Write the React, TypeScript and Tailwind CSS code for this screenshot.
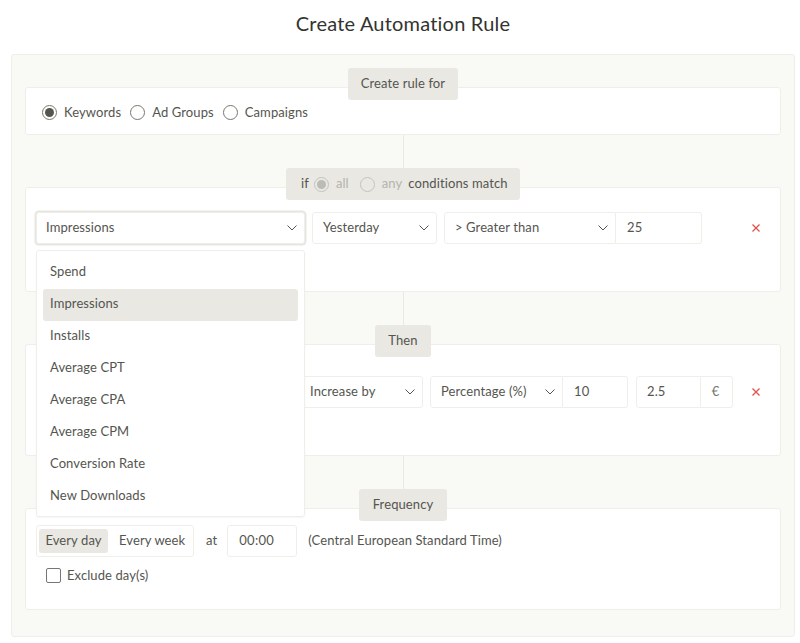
import React from "react";

const Chevron = () => (
  <svg width="12" height="8" viewBox="0 0 12 8" fill="none" className="shrink-0">
    <path d="M1.5 1.5 L6 6 L10.5 1.5" stroke="#55554f" strokeWidth="1" />
  </svg>
);

const Cross = () => (
  <svg width="10" height="10" viewBox="0 0 10 10" fill="none" className="shrink-0">
    <path d="M1.5 1.5 L8.5 8.5 M8.5 1.5 L1.5 8.5" stroke="#e0524d" strokeWidth="1.3" />
  </svg>
);

const Radio = ({ on, dim }: { on?: boolean; dim?: boolean }) => (
  <span className={`flex h-[15px] w-[15px] shrink-0 items-center justify-center rounded-full border ${dim ? "border-[#c4c4bf]" : "border-[#77776f]"}`}>
    {on && <span className={`h-[9px] w-[9px] rounded-full ${dim ? "bg-[#bcbcb6]" : "bg-[#55554f]"}`} />}
  </span>
);

const Badge = ({ children, w }: { children: React.ReactNode; w: string }) => (
  <div className={`relative z-10 mb-[-13px] flex h-[32px] items-center rounded-[3px] bg-[#e9e8e3] ${w}`}>
    {children}
  </div>
);

const Connector = () => <div className="mx-auto h-[33px] w-px bg-[#e9e9e3]" />;

const Card = ({ children, h, extra = "" }: { children: React.ReactNode; h: string; extra?: string }) => (
  <div className={`w-full rounded-[3px] border border-[#efefea] bg-white ${h} ${extra}`}>{children}</div>
);

const SelectBox = ({ text, w, extra = "" }: { text: string; w: string; extra?: string }) => (
  <div className={`flex h-[32px] shrink-0 items-center justify-between border border-[#efefea] bg-white pb-px pr-[6px] ${w} ${extra}`}>
    <span>{text}</span>
    <Chevron />
  </div>
);

const items = ["Spend", "Impressions", "Installs", "Average CPT", "Average CPA", "Average CPM", "Conversion Rate", "New Downloads"];

export default function App() {
  return (
    <div className="min-h-[643px] bg-white font-['Lato',sans-serif] text-[13px] tracking-[0.1px] text-[#55554f]">
      <h1 className="flex h-[54px] items-center justify-center pb-[8px] pl-[6px] text-[20px] tracking-[0.2px] text-[#33332f]">Create Automation Rule</h1>
      <div className="mx-[11px] flex h-[583px] w-[784px] flex-col items-center rounded-[3px] border border-[#efefea] bg-[#f9f9f6] px-[13px] pt-[13px]">
        <Badge w="w-[110px] justify-center">Create rule for</Badge>
        <Card h="h-[48px]" extra="flex items-center pl-[16px] pt-[3px]">
          <label className="flex items-center gap-[7px]"><Radio on />Keywords</label>
          <label className="ml-[9px] flex items-center gap-[7px]"><Radio />Ad Groups</label>
          <label className="ml-[9px] flex items-center gap-[7px]"><Radio />Campaigns</label>
        </Card>
        <Connector />

        <Badge w="w-[234px] pl-[15px]">
          <span>if</span>
          <span className="ml-[5px] flex items-center gap-[7px] text-[#b4b4ae]"><Radio on dim />all</span>
          <span className="ml-[11px] flex items-center gap-[7px] text-[#b4b4ae]"><Radio dim />any</span>
          <span className="ml-[6px]">conditions match</span>
        </Badge>
        <Card h="h-[105px]" extra="flex items-start pl-[10px] pt-[24px]">
          <div className="relative shrink-0">
            <SelectBox text="Impressions" w="w-[269px]" extra="rounded-[3px] pl-[9px] shadow-[0_0_0_1.5px_#e6e5e0]" />
            <div className="absolute left-0 top-[38px] z-20 h-[267px] w-[269px] rounded-[3px] border border-[#efefea] bg-white px-[6px] pt-[6px] shadow-[0_1px_2px_rgba(0,0,0,0.04)]">
              {items.map((t) => (
                <div key={t} className={`flex h-[32px] items-center rounded-[3px] px-[7px] pb-[2px] ${t === "Impressions" ? "bg-[#e9e8e3]" : ""}`}>
                  {t}
                </div>
              ))}
            </div>
          </div>
          <SelectBox text="Yesterday" w="ml-[7px] w-[125px]" extra="rounded-[3px] pl-[10px]" />
          <SelectBox text="> Greater than" w="ml-[7px] w-[172px]" extra="rounded-l-[3px] pl-[10px]" />
          <div className="flex h-[32px] w-[86px] items-center rounded-r-[3px] border border-l-0 border-[#efefea] pb-px pl-[11px]">25</div>
          <div className="ml-[49px] flex h-[32px] items-center pb-px"><Cross /></div>
        </Card>
        <Connector />

        <Badge w="w-[56px] justify-center">Then</Badge>
        <Card h="h-[112px]" extra="flex items-start pl-[10px] pt-[31px]">
          <div className="h-[32px] w-[256px] shrink-0 rounded-[3px] border border-[#efefea]" />
          <SelectBox text="Increase by" w="ml-[7px] w-[124px]" extra="rounded-[3px] pl-[10px]" />
          <SelectBox text="Percentage (%)" w="ml-[7px] w-[133px]" extra="rounded-l-[3px] pl-[10px]" />
          <div className="flex h-[32px] w-[65px] items-center rounded-r-[3px] border border-l-0 border-[#efefea] pb-px pl-[11px]">10</div>
          <div className="ml-[8px] flex h-[32px] w-[65px] items-center rounded-l-[3px] border border-[#efefea] pb-px pl-[10px]">2.5</div>
          <div className="flex h-[32px] w-[32px] items-center justify-center rounded-r-[3px] border border-l-0 border-[#efefea] pb-px pr-[2px] text-[#77776f]">€</div>
          <div className="ml-[18px] flex h-[32px] items-center pb-px"><Cross /></div>
        </Card>
        <Connector />

        <Badge w="w-[88px] justify-center">Frequency</Badge>
        <Card h="h-[102px]" extra="pl-[10px] pt-[16px]">
          <div className="flex items-center">
            <div className="flex h-[32px] w-[158px] items-center rounded-[3px] border border-[#efefea] pl-[2px]">
              <span className="flex h-[24px] w-[69px] items-center justify-center rounded-[3px] bg-[#e9e8e3]">Every day</span>
              <span className="ml-[11px]">Every week</span>
            </div>
            <span className="ml-[12px]">at</span>
            <div className="ml-[10px] flex h-[32px] w-[70px] items-center rounded-[3px] border border-[#efefea] pl-[11px] tracking-[0.3px]">00:00</div>
            <span className="ml-[11px]">(Central European Standard Time)</span>
          </div>
          <label className="ml-[10px] mt-[9px] flex items-center gap-[6px]">
            <span className="h-[15px] w-[15px] rounded-[2px] border border-[#77776f]" />
            Exclude day(s)
          </label>
        </Card>
      </div>
    </div>
  );
}
